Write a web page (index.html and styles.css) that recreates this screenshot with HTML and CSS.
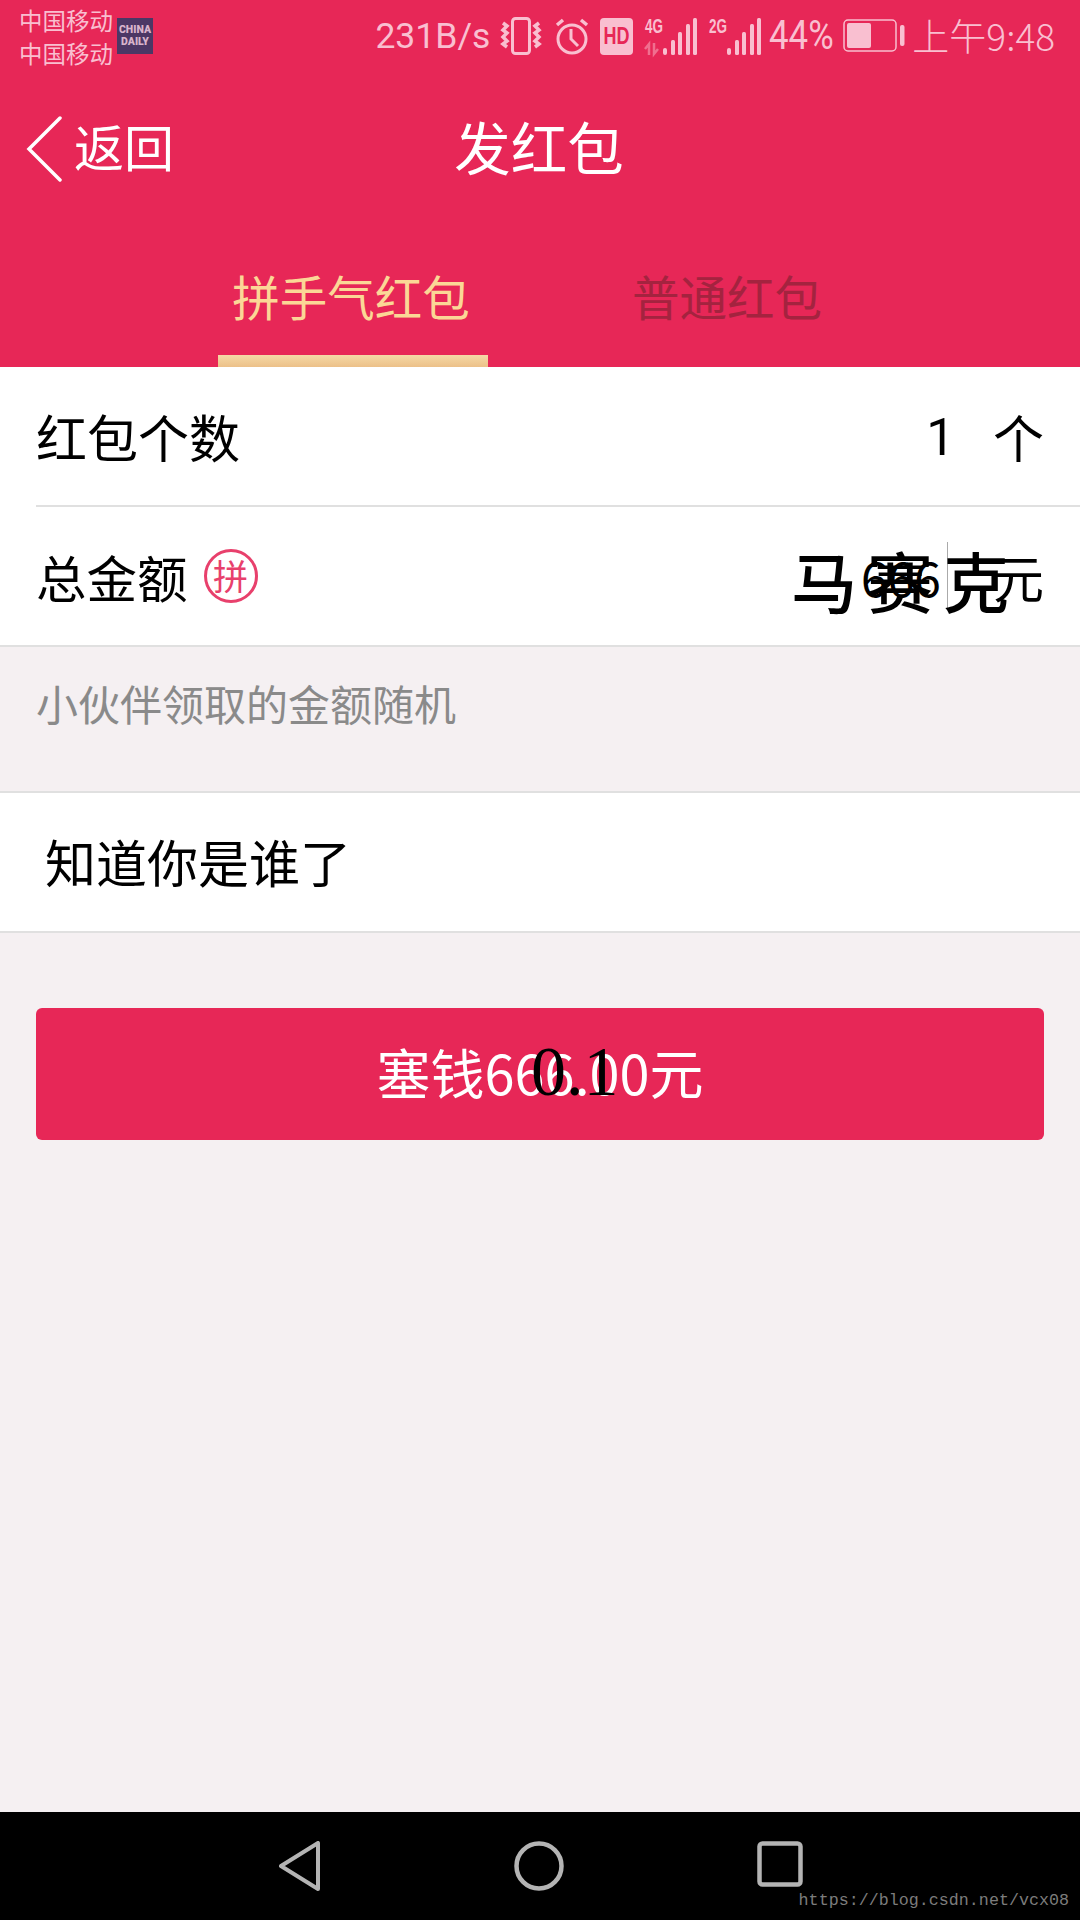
FILE: index.html
```html
<!DOCTYPE html>
<html>
<head>
  <title>发红包</title>
  <link rel="stylesheet" href="styles.css">
</head>
<body>
  <div class="phone">

    <header class="top">
      <div class="status">
        <div class="carriers">
          <div>中国移动</div>
          <div>中国移动</div>
        </div>
        <div class="daily"><span>CHINA</span><span>DAILY</span></div>
        <div class="status-right">
          <span class="speed">231B/s</span>
          <svg class="ic-vibrate" width="42" height="38" viewBox="0 0 42 38" fill="none" stroke="#f9bfd0">
            <rect x="12.5" y="1.5" width="17" height="35" rx="3" stroke-width="3"/>
            <path d="M3 6l4 3-4 4 4 3-4 4 4 4-4 3 4 3" stroke-width="3.5"/>
            <path d="M39 6l-4 3 4 4-4 3 4 4-4 4 4 3-4 3" stroke-width="3.5"/>
          </svg>
          <svg class="ic-alarm" width="34" height="38" viewBox="0 0 34 38" fill="none" stroke="#f9bfd0" stroke-width="3">
            <circle cx="17" cy="22" r="14"/>
            <path d="M16 12v10l7 7"/>
            <path d="M2 8l6-5M32 8l-6-5" stroke-width="3.5"/>
          </svg>
          <svg class="ic-hd" width="33" height="37" viewBox="0 0 33 37">
            <rect width="33" height="37" rx="4" fill="#f9bfd0"/>
            <text x="3.5" y="26" textLength="26" lengthAdjust="spacingAndGlyphs" class="hd-text">HD</text>
          </svg>
          <svg class="ic-signal" width="53" height="39" viewBox="0 0 53 39">
            <text x="0" y="16" textLength="18" lengthAdjust="spacingAndGlyphs" class="net-text">4G</text>
            <path d="M4 38V27l-4 5M9 26v11l4-5" fill="none" stroke="#f06f8f" stroke-width="2.5"/>
            <rect x="18" y="31" width="4" height="7" rx="2" fill="#f9bfd0"/>
            <rect x="26" y="23" width="4" height="15" rx="1.5" fill="#f9bfd0"/>
            <rect x="33" y="15" width="4" height="23" rx="1.5" fill="#f9bfd0"/>
            <rect x="41" y="7" width="4" height="31" rx="1.5" fill="#f9bfd0"/>
            <rect x="48" y="1" width="4" height="37" rx="1.5" fill="#f9bfd0"/>
          </svg>
          <svg class="ic-signal ic-second" width="53" height="39" viewBox="0 0 53 39">
            <text x="0" y="16" textLength="18" lengthAdjust="spacingAndGlyphs" class="net-text">2G</text>
            <rect x="18" y="31" width="4" height="7" rx="2" fill="#f9bfd0"/>
            <rect x="26" y="23" width="4" height="15" rx="1.5" fill="#f9bfd0"/>
            <rect x="33" y="15" width="4" height="23" rx="1.5" fill="#f9bfd0"/>
            <rect x="41" y="7" width="4" height="31" rx="1.5" fill="#f9bfd0"/>
            <rect x="48" y="1" width="4" height="37" rx="1.5" fill="#f9bfd0"/>
          </svg>
          <span class="percent">44%</span>
          <svg class="ic-battery" width="62" height="33" viewBox="0 0 62 33" fill="none">
            <rect x="1" y="1" width="52" height="31" rx="4" stroke="#f9bfd0" stroke-width="1.5"/>
            <rect x="4" y="4" width="24" height="25" rx="2" fill="#f9bfd0"/>
            <rect x="57" y="6" width="4.5" height="21" rx="2" fill="#f9bfd0"/>
          </svg>
          <span class="clock">上午9:48</span>
        </div>
      </div>

      <div class="nav-bar">
        <a class="back">
          <svg class="back-arrow" width="36" height="66" viewBox="0 0 36 66" fill="none" stroke="#fff" stroke-width="3.5" stroke-linecap="round">
            <path d="M34 2L3 33l31 31"/>
          </svg>
          <span class="back-text">返回</span>
        </a>
        <div class="title">发红包</div>
      </div>

      <div class="tabs">
        <div class="tab tab-active">拼手气红包</div>
        <div class="tab">普通红包</div>
      </div>
    </header>

    <section class="panel">
      <div class="row">
        <span>红包个数</span>
        <span class="value"><span class="num">1</span><span>个</span></span>
      </div>
      <div class="row row-last">
        <span class="label">总金额 <span class="pin">拼</span></span>
        <span class="value"><span class="amount">666</span><span class="cursor"></span><span>元</span></span>
        <div class="mosaic"><span>马</span><span>赛</span><span>克</span></div>
      </div>
    </section>

    <p class="hint">小伙伴领取的金额随机</p>

    <section class="panel panel-bless">
      <div class="bless">知道你是谁了</div>
    </section>

    <div class="pay">
      <button class="pay-btn">塞钱666.00元<span class="stamp">0.1</span></button>
    </div>

    <div class="spacer"></div>

    <footer class="softkeys">
      <svg width="42" height="50" viewBox="0 0 42 50" fill="none" stroke="#b4b4b4" stroke-width="4" stroke-linejoin="round">
        <path d="M39 2v46L2 25z"/>
      </svg>
      <svg width="50" height="50" viewBox="0 0 50 50" fill="none" stroke="#b4b4b4" stroke-width="4.5">
        <circle cx="25" cy="25" r="22.5"/>
      </svg>
      <svg width="46" height="46" viewBox="0 0 46 46" fill="none" stroke="#b4b4b4" stroke-width="4.5">
        <rect x="2.5" y="2.5" width="41" height="41" rx="3"/>
      </svg>
      <span class="watermark">https://blog.csdn.net/vcx08</span>
    </footer>

  </div>
</body>
</html>
```

FILE: styles.css
```css
* {
  box-sizing: border-box;
}
body {
  margin: 0;
  background-color: #f5f0f2;
  font-family: "Noto Sans CJK SC", Roboto, sans-serif;
  color: #000;
}
.phone {
  width: 1080px;
  height: 1920px;
  display: flex;
  flex-direction: column;
  overflow: hidden;
}

/* red header */
.top {
  height: 367px;
  background-color: #e72757;
  color: #fff;
}
.status {
  height: 72px;
  padding: 0 25px 0 19px;
  display: flex;
  align-items: center;
  color: #f9bfd0;
}
.carriers {
  font-size: 23.5px;
  line-height: 33px;
  margin-top: 2px;
}
.daily {
  width: 36px;
  height: 36px;
  margin: 0 0 0 4px;
  background-color: #4c3765;
  color: #d8b4cc;
  font: 900 10.5px/12px Roboto, sans-serif;
  display: flex;
  flex-direction: column;
  align-items: center;
  justify-content: center;
}
.status-right {
  margin-left: auto;
  display: flex;
  align-items: center;
}
.speed {
  font: 400 35.5px Roboto, sans-serif;
  margin-right: 10px;
}
.ic-alarm {
  margin-left: 13px;
}
.ic-hd {
  margin-left: 11px;
  overflow: visible;
}
.hd-text {
  font: 700 24px "Liberation Sans", sans-serif;
  fill: #e72757;
}
.ic-signal {
  margin-left: 12px;
  overflow: visible;
}
.ic-second {
  margin-left: 11px;
}
.net-text {
  font: 700 20px "Liberation Sans", sans-serif;
  fill: #f9bfd0;
}
.percent {
  width: 65px;
  font: 400 41px Roboto, sans-serif;
  white-space: nowrap;
  transform: scaleX(0.85);
  transform-origin: left;
  margin-left: 7px;
  margin-top: -3px;
}
.ic-battery {
  margin-left: 9px;
  margin-top: -2px;
}
.clock {
  font: 300 37px "Noto Sans CJK SC", Roboto, sans-serif;
  margin-left: 7px;
  margin-top: -2px;
}

.nav-bar {
  height: 156px;
  position: relative;
  display: flex;
  align-items: center;
  justify-content: center;
}
.back {
  position: absolute;
  left: 26px;
  top: 38px;
  display: flex;
  align-items: center;
  gap: 12px;
  font-size: 50px;
}
.back-arrow {
  margin-top: 6px;
}
.back-text {
  margin-top: -2px;
}
.title {
  font-size: 56.5px;
  margin: -11px 2px 0 0;
}

.tabs {
  height: 139px;
  display: flex;
  justify-content: center;
  gap: 104px;
}
.tab {
  width: 270px;
  font-size: 47.5px;
  text-align: center;
  color: #a4233f;
  padding-top: 33px;
}
.tab-active {
  color: #fbd796;
  padding-right: 4px;
  background: linear-gradient(#f5d9a6, #ecc088) bottom / 100% 12px no-repeat;
}

/* white rows */
.panel {
  background-color: #fff;
  border-bottom: 2px solid #e0e0e0;
}
.row {
  position: relative;
  height: 140px;
  margin-left: 36px;
  padding-right: 36px;
  border-bottom: 2px solid #e0e0e0;
  display: flex;
  align-items: center;
  justify-content: space-between;
  font-size: 51px;
}
.row-last {
  height: 138px;
  border-bottom: none;
}
.label {
  display: flex;
  align-items: center;
  gap: 16px;
  font-size: 50.5px;
}
.pin {
  width: 54px;
  height: 54px;
  border: 3px solid #e8406c;
  border-radius: 50%;
  color: #e8406c;
  font-size: 35px;
  line-height: 46px;
  text-align: center;
}
.value {
  display: flex;
  align-items: center;
}
.num {
  margin: 3px 38px 0 0;
  font-family: Roboto, sans-serif;
}
.amount {
  font-size: 48px;
}
.cursor {
  width: 1px;
  height: 68px;
  background-color: #aaa;
  margin: 0 45px 0 6px;
}
.mosaic {
  position: absolute;
  right: 71px;
  top: 34px;
  display: flex;
  gap: 10px;
  font-size: 66px;
  font-weight: 500;
  line-height: 76px;
}

.hint {
  margin: 0;
  height: 146px;
  padding: 25px 0 0 36px;
  font-size: 42px;
  color: #8a8a8a;
  border-bottom: 2px solid #e0e0e0;
}
.bless {
  height: 138px;
  padding: 0 0 2px 45px;
  display: flex;
  align-items: center;
  font-size: 51px;
}

.pay {
  padding: 75px 36px 0;
}
.pay-btn {
  position: relative;
  width: 100%;
  height: 132px;
  padding-bottom: 6px;
  border: none;
  border-radius: 6px;
  background-color: #e72757;
  color: #fff;
  font-family: "Noto Sans CJK SC", Roboto, sans-serif;
  font-size: 54px;
}
.stamp {
  position: absolute;
  left: 495px;
  top: 22px;
  color: #000;
  font: 70px/84px "Liberation Serif", serif;
}
.spacer {
  flex: 1;
}

/* android keys */
.softkeys {
  position: relative;
  height: 108px;
  flex-shrink: 0;
  background-color: #000;
  padding: 29px 277px 0 279px;
  display: flex;
  align-items: flex-start;
  justify-content: space-between;
}
.watermark {
  position: absolute;
  right: 11px;
  bottom: 10px;
  color: #7c7c7c;
  font: 16.7px "Liberation Mono", monospace;
}
```
